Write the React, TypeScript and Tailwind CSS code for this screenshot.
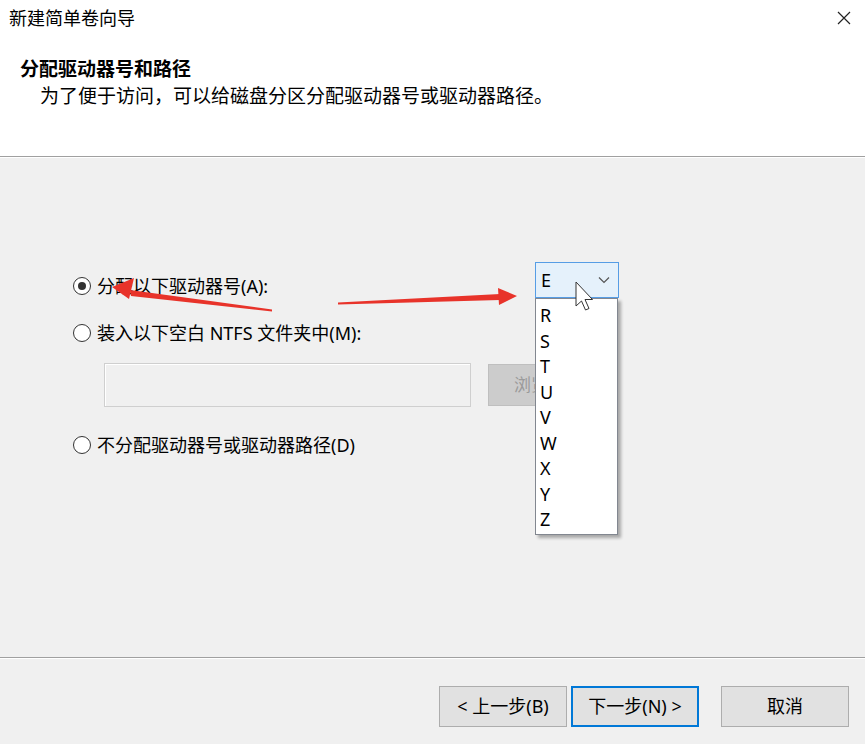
import React from "react";

const FONT = { fontFamily: '"Noto Sans", "Noto Sans CJK SC", sans-serif' };

function Radio({ checked }: { checked?: boolean }) {
  return (
    <span className="flex h-[18px] w-[18px] shrink-0 items-center justify-center rounded-full border-[1.5px] border-[#333] bg-white">
      {checked && <span className="h-[8px] w-[8px] rounded-full bg-[#333]" />}
    </span>
  );
}

function Btn({ children, primary }: { children: React.ReactNode; primary?: boolean }) {
  return (
    <button
      className={
        "flex h-[41px] w-[128px] items-center justify-center bg-[#e1e1e1] text-[18px] text-black " +
        (primary ? "border-2 border-[#0078d7]" : "border border-[#adadad]")
      }
    >
      {children}
    </button>
  );
}

const letters = ["R", "S", "T", "U", "V", "W", "X", "Y", "Z"];

export default function App() {
  return (
    <div className="relative flex h-[744px] w-[865px] flex-col overflow-hidden bg-[#f0f0f0]" style={FONT}>
      {/* header */}
      <div className="h-[157px] shrink-0 border-b border-[#a0a0a0] bg-white">
        <div className="flex h-[36px] items-center justify-between pl-[9px] pr-[12px]">
          <span className="text-[18px] text-black">新建简单卷向导</span>
          <svg width="16" height="16" viewBox="0 0 16 16" className="mr-[1px]">
            <path d="M2 2 L14 14 M14 2 L2 14" stroke="#222" strokeWidth="1.2" fill="none" />
          </svg>
        </div>
        <div className="pl-[20px] pt-[20px] text-[19px] font-bold leading-[27px] text-black">分配驱动器号和路径</div>
        <div className="pl-[40px] text-[19px] leading-[27px] text-black">
          为了便于访问，可以给磁盘分区分配驱动器号或驱动器路径。
        </div>
      </div>

      {/* body */}
      <div className="flex-1 border-t border-white pl-[73px] pt-[104px]">
        <div className="flex items-start">
          <label className="mt-[12px] flex h-[24px] w-[462px] items-center gap-[6px] text-[18px] text-black">
            <Radio checked />
            分配以下驱动器号(A):
          </label>
          <div className="relative">
            <div className="flex h-[36px] w-[84px] items-center justify-between border border-[#569de5] bg-[#e5f1fb] pl-[5px] pr-[8px] text-[18px] text-black">
              <span>E</span>
              <svg width="12" height="8" viewBox="0 0 12 8">
                <path d="M1 1.5 L6 6.5 L11 1.5" stroke="#555" strokeWidth="1.2" fill="none" />
              </svg>
            </div>
            <div className="absolute left-0 top-[36px] z-10 w-[83px] border border-[#828790] bg-white pb-[1px] pl-[4px] pt-[4px] text-[18px] leading-[25.5px] text-black shadow-[3px_3px_3px_rgba(0,0,0,0.3)]">
              {letters.map((l) => (
                <div key={l}>{l}</div>
              ))}
            </div>
          </div>
        </div>

        <label className="mt-[23px] flex h-[24px] items-center gap-[6px] text-[18px] text-black">
          <Radio />
          装入以下空白 NTFS 文件夹中(M):
        </label>
        <div className="ml-[31px] mt-[18px] flex items-center gap-[17px]">
          <div className="h-[44px] w-[367px] border border-[#cfcfcf] bg-[#f0f0f0] shadow-[inset_1px_1px_0_#fff]" />
          <div className="flex h-[42px] w-[127px] items-center overflow-hidden border border-[#bfbfbf] bg-[#cccccc] pl-[25px] text-[17px] text-[#9a9a9a]">
            浏览(R)...
          </div>
        </div>

        <label className="mt-[26px] flex h-[24px] items-center gap-[6px] text-[18px] text-black">
          <Radio />
          不分配驱动器号或驱动器路径(D)
        </label>
      </div>

      {/* footer */}
      <div className="h-[87px] shrink-0 border-t border-[#a0a0a0]">
        <div className="h-full border-t border-white pl-[439px] pt-[27px]">
          <div className="flex items-center">
            <Btn>&lt; 上一步(B)</Btn>
            <span className="w-[4px]" />
            <Btn primary>下一步(N) &gt;</Btn>
            <span className="w-[22px]" />
            <Btn>取消</Btn>
          </div>
        </div>
      </div>

      {/* annotations: red arrows and mouse cursor */}
      <svg className="pointer-events-none absolute left-0 top-0 z-20" width="865" height="744">
        <polygon points="272,309.5 130,290 131,296 272,311.5" fill="#e8332a" />
        <polygon points="112,287 134,278 129,299" fill="#e8332a" />
        <polygon points="338,302.5 500,294 500,300 338,304.5" fill="#e8332a" />
        <polygon points="517,296 498,288 499,305" fill="#e8332a" />
        <path
          d="M576 282 L576 306 L581.5 301 L585.5 310 L589 308.5 L585 299.5 L592.5 299.5 Z"
          fill="#fff"
          stroke="#333"
          strokeWidth="1"
          strokeLinejoin="round"
        />
      </svg>
    </div>
  );
}
